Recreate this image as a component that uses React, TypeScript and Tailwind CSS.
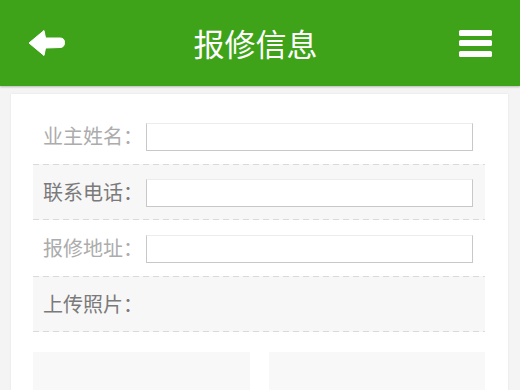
import React from 'react';

const rows = [
  { label: '业主姓名', input: true, shade: false },
  { label: '联系电话', input: true, shade: true },
  { label: '报修地址', input: true, shade: false },
  { label: '上传照片', input: false, shade: true },
];

function Dashes() {
  return <div className="h-[1px] bg-[repeating-linear-gradient(90deg,#d9d9d9_0_6px,transparent_6px_10px)]" />;
}

export default function App() {
  return (
    <div
      className="w-[520px] h-[390px] overflow-hidden bg-[#f4f4f4]"
      style={{ fontFamily: '"Noto Sans CJK SC", "Noto Sans", sans-serif' }}
    >
      {/* Header */}
      <div className="h-[86px] bg-[#3fa31a] flex items-center justify-between px-[28px] shadow-[0_1px_2px_rgba(0,0,0,0.25)]">
        <svg width="37" height="26" viewBox="0 0 37 26">
          <path
            d="M1 13 L16 0.5 L17.5 8 L32 8 Q36.5 8 36.5 12.5 Q36.5 17.5 32 17.5 L17.5 18 L16 25.5 Z"
            fill="#fff"
            strokeLinejoin="round"
            stroke="#fff"
            strokeWidth="1"
          />
        </svg>
        <h1 className="text-[31px] leading-none text-white font-normal -mt-[1px] mr-[13px]">报修信息</h1>
        <div className="flex flex-col gap-[4.5px] w-[33px]">
          <span className="h-[6px] rounded-[1.5px] bg-white" />
          <span className="h-[6px] rounded-[1.5px] bg-white" />
          <span className="h-[6px] rounded-[1.5px] bg-white" />
        </div>
      </div>

      {/* Card */}
      <div className="ml-[11px] w-[497px] mt-[8px] bg-white h-[320px] pl-[22px] pr-[23px] pt-[14px] shadow-[0_0_2px_rgba(0,0,0,0.08)]">
        {rows.map((r) => (
          <div key={r.label} className={r.shade ? 'bg-[#f7f7f7]' : ''}>
            {r.shade && <Dashes />}
            <div className={`${r.shade ? 'h-[54px]' : 'h-[56px]'} flex items-center pl-[10px]`}>
              <span
                className={`text-[20px] leading-none whitespace-nowrap ${
                  r.shade ? 'text-[#7a7a7a]' : 'text-[#acacac]'
                }`}
              >
                {r.label}：
              </span>
              {r.input && (
                <div className="ml-[3px] mt-[2px] w-[327px] h-[28px] bg-white border border-[#c8c8c8] border-t-[#ececec]" />
              )}
            </div>
            {r.shade && <Dashes />}
          </div>
        ))}
        <div className="grid grid-cols-2 gap-[19px] mt-[20px]">
          <div className="h-[60px] bg-[#f8f8f8]" />
          <div className="h-[60px] bg-[#f8f8f8]" />
        </div>
      </div>
    </div>
  );
}
